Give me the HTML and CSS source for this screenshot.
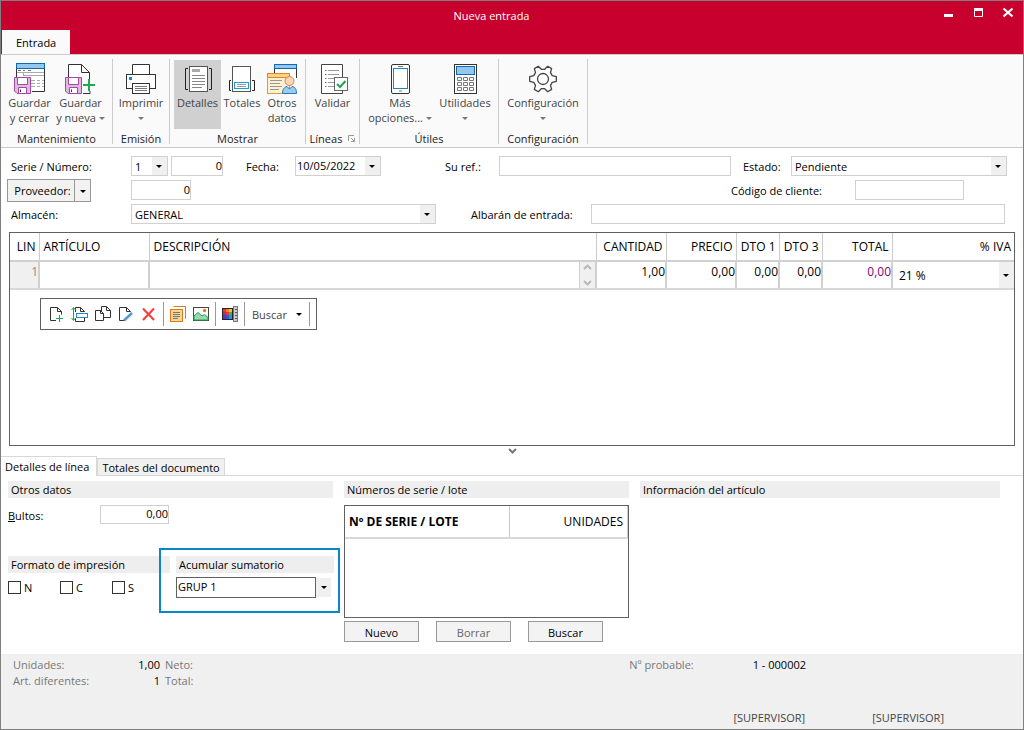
FILE: index.html
```html
<!DOCTYPE html>
<html lang="es">
<head>
<meta charset="utf-8">
<title>Nueva entrada</title>
<link rel="stylesheet" href="styles.css">
</head>
<body>
<svg class="defs" width="0" height="0" aria-hidden="true">
  <symbol id="floppy" viewBox="0 0 17 17">
    <path d="M.5.5H16.5V16.5H3L.5 14Z" fill="#dfb9e0" stroke="#a04aa5"/>
    <path d="M3.5.5H13.5V7.5H3.5Z" fill="#fff" stroke="#a04aa5"/>
    <path d="M4.5 16.5V10.5H12.5V16.5Z" fill="#fff" stroke="#a04aa5"/>
    <path d="M6.5 12.5V15" stroke="#333"/>
  </symbol>
  <symbol id="page" viewBox="0 0 16 16">
    <path d="M1.5 1.5H8.5L12.5 5.5V14.5H1.5Z" fill="#fff"/>
    <path d="M7 14.5H1.5V1.5H8.5L12.5 5.5V9M8.5 1.5V5.5H12.5" fill="none" stroke="#333"/>
  </symbol>
</svg>
<div class="window">
  <header class="titlebar">
    <h1 class="title">Nueva entrada</h1>
    <div class="window-buttons">
      <button aria-label="Minimizar"><svg width="12" height="12"><path d="M2 8.500H11" stroke="#fff" stroke-width="3"/></svg></button>
      <button aria-label="Maximizar"><svg width="12" height="12"><path d="M2.500 3V9.500H10.500V3" fill="none" stroke="#fff"/><path d="M2 2.500H11" stroke="#fff" stroke-width="3"/></svg></button>
      <button aria-label="Cerrar"><svg width="12" height="12"><path d="M1.500 1.500L10.500 9.500M10.500 1.500L1.500 9.500" stroke="#fff" stroke-width="2.200"/></svg></button>
    </div>
  </header>
  <nav class="ribbon-tabs"><button class="ribbon-tab">Entrada</button></nav>

  <div class="ribbon">
    <section class="group group-main">
      <div class="tools">
        <button class="tool">
          <svg width="32" height="32"><path d="M3 7H30V29H3Z" fill="#fff"/><path d="M2.500 7V15M30.500 7V29.500H18" fill="none" stroke="#333"/><rect x="2.500" y="1.500" width="28" height="5" fill="#93c8ee" stroke="#1267b1"/><path d="M4 8.500h3m2 0h2m3 0h3" stroke="#777"/><path d="M3 10.500H30M9.500 10.500V14M9 13.500H30M17 18.500h4m2 0h3m2 0h2M17 21.500h4m2 0h3m2 0h2M17 24.500h4m2 0h3m2 0h2" stroke="#aaa"/><use href="#floppy" y="15" width="17" height="17"/></svg>
          <span>Guardar<br>y cerrar</span>
        </button>
        <button class="tool">
          <svg width="32" height="32"><path d="M3.500 15V2.500H16.500L24.500 10.500V17M16.500 2.500V10.500H24.500M18 31.500H25V29" fill="#fff" stroke="#333"/><use href="#floppy" y="15" width="17" height="17"/><path d="M18 23H30M24 17V29" stroke="#1fa751" stroke-width="2"/></svg>
          <span>Guardar<br>y nueva <i class="caret"></i></span>
        </button>
      </div>
      <h2>Mantenimiento</h2>
    </section>
    <section class="group group-print">
      <div class="tools">
        <button class="tool">
          <svg width="32" height="32"><g fill="#fff" stroke="#333"><path d="M7.500 12.500V2.500H24.500V12.500"/><rect x="1.500" y="12.500" width="29" height="14"/><rect x="7.500" y="21.500" width="17" height="10"/><path d="M10 24.500H22M10 26.500H22M10 28.500H22" stroke="#777"/></g><rect x="4" y="15" width="3" height="3" fill="#1787d3"/></svg>
          <span>Imprimir<br><i class="caret"></i></span>
        </button>
      </div>
      <h2>Emisión</h2>
    </section>
    <section class="group group-show">
      <div class="tools">
        <button class="tool pressed">
          <svg width="32" height="32"><rect x="7.500" y="4.500" width="18" height="25" fill="#fff" stroke="#555"/><path d="M6 6.500H3.500V27.500H6M27 6.500H29.500V27.500H27" fill="none" stroke="#222"/><rect x="10" y="7" width="8" height="3" fill="#aaa"/><path d="M10 13.500H23M10 16.500H23M10 19.500H23M10 22.500H23M10 25.500H20" stroke="#888"/></svg>
          <span>Detalles</span>
        </button>
        <button class="tool">
          <svg width="32" height="32"><rect x="6.500" y="4.500" width="18" height="25" fill="#fff" stroke="#555"/><path d="M5 18.500H3.500V28.500H5M26 18.500H28.500V28.500H26" fill="none" stroke="#222"/><rect x="8.500" y="20.500" width="14" height="6" fill="#fff" stroke="#199bdc"/><path d="M11 22.500H20M11 24.500H20" stroke="#999"/></svg>
          <span>Totales</span>
        </button>
        <button class="tool narrow">
          <svg width="32" height="32"><path d="M9 6H31V24H9Z" fill="#fff"/><path d="M8.500 6V12M30.500 6V16" stroke="#333"/><rect x="8.500" y="2.500" width="22" height="4" fill="#93c8ee" stroke="#1267b1"/><rect x="1.500" y="11.500" width="22" height="20" fill="#fdf1d2" stroke="#df9a3d"/><path d="M1.500 11.500H23.500V15.500H1.500Z" fill="#fbd27f" stroke="#dd8430"/><path d="M4 18.500H16M4 21.500H14M4 24.500H16M4 27.500H13" stroke="#999"/><circle cx="23.500" cy="19" r="4.500" fill="#f8d7b8" stroke="#c98b5c"/><path d="M16.500 31.500C16.500 27 18.500 25 21 24.500L23.500 27L26 24.500C29 25 30.500 27 30.500 31.500Z" fill="#9ccbed" stroke="#2d75b5"/></svg>
          <span>Otros<br>datos</span>
        </button>
      </div>
      <h2>Mostrar</h2>
    </section>
    <section class="group group-lines">
      <div class="tools">
        <button class="tool">
          <svg width="32" height="32"><path d="M25.500 16V2.500H4.500V31.500H25.500V29" fill="#fff" stroke="#444"/><path d="M11 8.500H22M11 12.500H22M11 16.500H17M11 20.500H17M11 24.500H17" stroke="#999"/><path d="M8 8.500h1.500M8 16.500h1.500M8 24.500h1.500" stroke="#1fa751"/><path d="M8 12.500h1.500M8 20.500h1.500" stroke="#d22"/><rect x="17.500" y="15.500" width="13" height="13" fill="#fff" stroke="#666"/><path d="M20 22L23 25L28.500 19" fill="none" stroke="#1fa751" stroke-width="2"/></svg>
          <span>Validar</span>
        </button>
      </div>
      <h2>Líneas <svg class="launcher" width="7" height="7"><path d="M.5 6V.5H6M3 3L6 6M6.500 3V6.500H3" fill="none" stroke="#999"/></svg></h2>
    </section>
    <section class="group group-utils">
      <div class="tools">
        <button class="tool wide">
          <svg width="32" height="32"><rect x="7.500" y="2.500" width="18" height="29" rx="1.500" fill="#fff" stroke="#333"/><rect x="9.500" y="6.500" width="14" height="20" fill="#fff" stroke="#1b85c9"/><path d="M14 4.500H19M15 29H18" stroke="#777"/></svg>
          <span>Más<br>opciones... <i class="caret"></i></span>
        </button>
        <button class="tool">
          <svg width="32" height="32"><rect x="5.500" y="2.500" width="22" height="29" fill="#fff" stroke="#333"/><rect x="7.500" y="4.500" width="18" height="8" fill="#93c8ee" stroke="#1267b1"/><g fill="none" stroke="#777"><path d="M8.500 15.500h4v3h-4zM14.500 15.500h4v3h-4zM20.500 15.500h4v3h-4zM8.500 20.500h4v3h-4zM14.500 20.500h4v3h-4zM20.500 20.500h4v3h-4zM8.500 25.500h4v3h-4zM14.500 25.500h4v3h-4zM20.500 25.500h4v3h-4z"/></g></svg>
          <span>Utilidades<br><i class="caret"></i></span>
        </button>
      </div>
      <h2>Útiles</h2>
    </section>
    <section class="group group-config">
      <div class="tools">
        <button class="tool">
          <svg width="32" height="32" viewBox="-16 -17 32 32"><path d="M9.200-3.400L13.300-2.300V2.300L9.200 3.400L7.500 6.300L8.600 10.400L4.700 12.700L1.700 9.700H-1.700L-4.700 12.700L-8.600 10.400L-7.500 6.300L-9.200 3.400L-13.300 2.300V-2.300L-9.200-3.400L-7.500-6.300L-8.600-10.400L-4.700-12.700L-1.700-9.700H1.700L4.700-12.700L8.600-10.400L7.500-6.300Z" fill="#fff" stroke="#444" stroke-width="1.300" stroke-linejoin="round"/><circle r="5.500" fill="none" stroke="#444" stroke-width="1.300"/></svg>
          <span>Configuración<br><i class="caret"></i></span>
        </button>
      </div>
      <h2>Configuración</h2>
    </section>
  </div>

  <form class="form">
    <div class="row">
      <label class="label-first" for="serie">Serie / Número:</label>
      <span class="combo w-serie"><select id="serie"><option>1</option></select></span>
      <input class="w-num number" aria-label="Número" value="0">
      <label class="label-date" for="fecha">Fecha:</label>
      <span class="combo w-date"><select id="fecha"><option>10/05/2022</option></select></span>
      <label class="label-ref" for="ref">Su ref.:</label>
      <input class="grow" id="ref">
      <label class="label-state" for="estado">Estado:</label>
      <span class="combo w-state"><select id="estado"><option>Pendiente</option></select></span>
    </div>
    <div class="row">
      <div class="split">
        <button type="button">Proveedor:</button><button type="button" class="split-arrow" aria-label="Opciones de proveedor"><i class="caret dark"></i></button>
      </div>
      <input class="w-supplier number" aria-label="Proveedor" value="0">
      <label class="label-client" for="cliente">Código de cliente:</label>
      <input class="w-client" id="cliente">
    </div>
    <div class="row">
      <label class="label-first" for="almacen">Almacén:</label>
      <span class="combo w-store"><select id="almacen"><option>GENERAL</option></select></span>
      <label class="label-note" for="albaran">Albarán de entrada:</label>
      <input class="grow" id="albaran">
    </div>
  </form>

  <main class="lines">
    <table class="lines-table">
      <colgroup><col class="c-lin"><col class="c-art"><col><col class="c-num"><col class="c-num"><col class="c-dto"><col class="c-dto"><col class="c-num"><col class="c-iva"></colgroup>
      <thead><tr><th class="number">LIN</th><th>ARTÍCULO</th><th>DESCRIPCIÓN</th><th class="number">CANTIDAD</th><th class="number">PRECIO</th><th class="number">DTO 1</th><th class="number">DTO 3</th><th class="number">TOTAL</th><th class="number">% IVA</th></tr></thead>
      <tbody><tr>
        <td class="number line-no">1</td><td></td>
        <td class="desc"><div class="spin"><svg width="9" height="24"><path d="M1 6L4.500 2.500L8 6M1 18L4.500 21.500L8 18" fill="none" stroke="#b5b5b5" stroke-width="1.800"/></svg></div></td>
        <td class="number">1,00</td><td class="number">0,00</td><td class="number">0,00</td><td class="number">0,00</td><td class="number total">0,00</td>
        <td class="iva"><span class="combo plain"><select aria-label="% IVA"><option>21 %</option></select></span></td>
      </tr></tbody>
    </table>
    <div class="toolbar">
      <button aria-label="Nueva línea"><svg width="18" height="18"><use href="#page" x="1" y="1" width="16" height="16"/><path d="M8 13H16M12 9V17" stroke="#fff" stroke-width="3"/><path d="M8 13.500H15M11.500 10V17" stroke="#1fa751"/></svg></button>
      <button aria-label="Insertar línea"><svg width="18" height="18"><path d="M4.500 7V2.500H9.500L13.500 6.500V7M9.500 2.500V6.500H13.500M4.500 13V16.500H13.500V13" fill="none" stroke="#333"/><rect x="5.500" y="8.500" width="11" height="4" fill="#fff" stroke="#2a86cc"/><path d="M2.500 3V15M.5 5L2.500 2.500L4.500 5M.5 13L2.500 15.500L4.500 13" fill="none" stroke="#1fa751"/></svg></button>
      <button aria-label="Copiar línea"><svg width="18" height="18"><path d="M7.500 12.500V1.500H12.500L16.500 5.500V12.500Z" fill="#fff" stroke="#333"/><path d="M12.500 1.500V5.500H16.500" fill="none" stroke="#333"/><path d="M1.500 5.500H6.500L9.500 8.500V15.500H1.500Z" fill="#fff" stroke="#333"/><path d="M6.500 5.500V8.500H9.500" fill="none" stroke="#333"/></svg></button>
      <button aria-label="Editar línea"><svg width="18" height="18"><use href="#page" x="1" y="1" width="16" height="16"/><path d="M8 15.500L15.500 8.500" stroke="#fff" stroke-width="5"/><path d="M7 15.500L15 8" stroke="#4a9ad6" stroke-width="2.400"/></svg></button>
      <button aria-label="Eliminar línea"><svg width="18" height="18"><path d="M3 3.500L14 15M14 3.500L3 15" stroke="#ef4444" stroke-width="2.200"/></svg></button>
      <i class="divider"></i>
      <button aria-label="Notas"><svg width="18" height="18"><path d="M4.500 1.500H16.500V14" fill="none" stroke="#dd7a20"/><rect x="1.500" y="4.500" width="12" height="12" fill="#fad694" stroke="#dd7a20"/><path d="M4 7.500H11M4 9.500H11M4 11.500H11M4 13.500H9" stroke="#777"/></svg></button>
      <button aria-label="Imagen"><svg width="18" height="18"><rect x="1.500" y="2.500" width="15" height="13" fill="#fff" stroke="#444"/><path d="M2 11L6 7.500L10 11L12.500 9.500L16 12.500V15H2Z" fill="#9bd8b2" stroke="#1fa751"/><circle cx="12.500" cy="5.500" r="1.700" fill="#e2762b"/></svg></button>
      <i class="divider"></i>
      <button aria-label="Color"><svg width="18" height="18"><path d="M1 3H12V15H1Z" fill="#222"/><path d="M2 4h3v3H2z" fill="#e33"/><path d="M5 4h3v3H5z" fill="#f47b20"/><path d="M8 4h3v3H8z" fill="#fbc617"/><path d="M2 7h3v3H2z" fill="#b0288e"/><path d="M5 7h3v3H5z" fill="#e33"/><path d="M8 7h3v3H8z" fill="#39b54a"/><path d="M2 10h3v4H2z" fill="#6534a3"/><path d="M5 10h3v4H5z" fill="#3057d3"/><path d="M8 10h3v4H8z" fill="#179ce0"/><rect x="12.500" y="1.500" width="4" height="15" fill="#ccc" stroke="#777"/><path d="M14 4.500h2M14 7.500h2M14 10.500h2M14 13.500h2" stroke="#555"/></svg></button>
      <i class="divider"></i>
      <button class="find">Buscar <i class="caret dark"></i></button>
      <i class="divider"></i>
    </div>
  </main>

  <button class="collapse" aria-label="Contraer"><svg width="9" height="6"><path d="M1 1L4.500 4.500L8 1" fill="none" stroke="#777" stroke-width="2"/></svg></button>

  <div class="tabs" role="tablist">
    <button class="tab active" role="tab" aria-selected="true">Detalles de línea</button>
    <button class="tab" role="tab" aria-selected="false">Totales del documento</button>
  </div>

  <div class="details">
    <section class="panel">
      <h3>Otros datos</h3>
      <div class="bultos"><label for="bultos"><u>B</u>ultos:</label><input id="bultos" class="number" value="0,00"></div>
      <div class="options">
        <div class="format">
          <h3>Formato de impresión</h3>
          <div class="checks">
            <label><input type="checkbox">N</label>
            <label><input type="checkbox">C</label>
            <label><input type="checkbox">S</label>
          </div>
        </div>
        <div class="accumulate">
          <h3 id="acc">Acumular sumatorio</h3>
          <div class="entry"><input aria-labelledby="acc" value="GRUP 1"><button aria-label="Desplegar"><i class="caret dark"></i></button></div>
        </div>
      </div>
    </section>
    <section class="panel">
      <h3>Números de serie / lote</h3>
      <div class="serials">
        <table class="serials-table"><thead><tr><th class="strong">Nº DE SERIE / LOTE</th><th class="number units">UNIDADES</th></tr></thead></table>
      </div>
      <div class="actions"><button>Nuevo</button><button class="dim">Borrar</button><button>Buscar</button></div>
    </section>
    <section class="panel"><h3>Información del artículo</h3></section>
  </div>

  <footer class="status">
    <div class="status-row">
      <dl class="totals">
        <dt>Unidades:</dt><dd>1,00</dd><dt>Neto:</dt>
        <dt>Art. diferentes:</dt><dd>1</dd><dt>Total:</dt>
      </dl>
      <div class="probable"><span>Nº probable:</span><b>1 - 000002</b></div>
    </div>
    <div class="users"><span>[SUPERVISOR]</span><span>[SUPERVISOR]</span></div>
  </footer>
</div>
</body>
</html>
```
FILE: styles.css
```css
* { box-sizing: border-box; }
body { margin: 0; font: 11px/15px "Open Sans", "Noto Sans", sans-serif; color: #000; background: #fff; }
button, input, select { font: inherit; color: inherit; margin: 0; padding: 0; border-radius: 0; }
button { background: none; border: 0; }
h1, h2, h3 { margin: 0; font: inherit; }
svg { display: block; flex: none; }
.defs { position: absolute; }
.window { min-height: 100vh; display: flex; flex-direction: column; border: 1px solid #7f7f7f; }
.number { text-align: right; }

.titlebar { display: grid; grid-template-columns: 1fr auto; align-items: center; height: 29px; background: #c8002d; color: #fff; }
.title { text-align: center; padding-left: 40px; }
.window-buttons { display: flex; gap: 18px; padding: 0 9px 6px 0; }
.ribbon-tabs { display: flex; background: #c8002d; padding-left: 1px; }
.ribbon-tab { height: 24px; padding: 0 14px; background: #fafafa; }

.caret { display: inline-block; border: 3px solid transparent; border-top-color: #777; border-bottom: 0; vertical-align: 2px; }
.caret.dark { border-top-color: #000; }

.ribbon { display: flex; height: 94px; padding: 4px 0 3px; background: #fafafa; border-top: 1px solid #ccc; border-bottom: 1px solid #c8c8c8; }
.group { display: flex; flex-direction: column; justify-content: space-between; border-right: 1px solid #ccc; color: #222; }
.group h2 { display: flex; justify-content: center; align-items: center; gap: 6px; height: 12px; }
.group-main { width: 112px; }
.group-print { width: 57px; }
.group-show { width: 136px; }
.group-lines { width: 54px; }
.group-utils { width: 139px; }
.group-config { width: 89px; }
.tools { display: flex; padding-left: 4px; margin-top: 1px; }
.group-main .tools { padding: 0 6px 0 3px; }
.group-utils .tools { padding-right: 4px; }
.group-print .tools, .group-lines .tools, .group-config .tools { padding: 0; }
.tool { flex: 1 1 0; min-width: 0; height: 69px; padding: 2px 0 0; display: flex; flex-direction: column; align-items: center; gap: 1px; color: #444; white-space: nowrap; }
.pressed { background: #d0d0d0; flex: 0 0 47px; }
.group-show .tool:nth-child(2) { flex: 0 0 42px; }
.group-show .narrow { flex: 0 0 38px; }
.group-utils .wide { flex: 0 0 72px; }

.form { display: flex; flex-direction: column; gap: 4px; padding: 8px 18px 0 10px; }
.row { display: flex; align-items: center; height: 20px; }
.row input, .row select { height: 20px; border: 1px solid #d0d0d0; background: #fff; }
.row input { padding: 0 4px 2px; }
.row .number { padding-right: 0; }
.grow { flex: 1; min-width: 0; }
.combo { position: relative; display: block; }
.combo select { appearance: none; display: block; width: 100%; padding: 0 18px 0 3px; }
.combo::before { content: ""; position: absolute; inset: 1px 1px 1px auto; width: 15px; background: #f0f0f0; pointer-events: none; }
.combo::after { content: ""; position: absolute; right: 6px; top: 9px; border: 3px solid transparent; border-top-color: #000; border-bottom: 0; pointer-events: none; }
.label-first { width: 120px; }
.w-serie { width: 37px; margin-right: 3px; }
.row .w-num { width: 52px; }
.label-date { width: 49px; margin-left: 23px; }
.w-date { width: 86px; }
.row .w-date select { padding: 0 18px 2px 1px; }
.label-ref { width: 54px; margin-left: 64px; }
.label-state { width: 48px; margin-left: 12px; }
.w-state { width: 216px; margin-right: -2px; }
.split { display: flex; width: 84px; height: 23px; margin: 0 40px 0 -4px; border: 1px solid #999; background: #f2f2f2; }
.split button { flex: 1; padding-left: 3px; }
.split .split-arrow { flex: 0 0 16px; padding: 0; border-left: 1px solid #999; }
.w-supplier { width: 60px; }
.label-client { width: 124px; margin-left: auto; }
.w-client { width: 109px; margin-right: 41px; }
.w-store { width: 305px; }
.label-note { width: 120px; margin-left: 35px; }

.lines { margin: 8px 8px 0; min-height: 214px; border: 1px solid #606060; }
table { width: 100%; border-collapse: collapse; table-layout: fixed; font-size: 12px; }
th { font-weight: 400; text-align: left; padding: 0 4px; border-right: 1px solid #ccc; white-space: nowrap; }
th.number { text-align: right; }
.lines-table th { height: 28px; border-bottom: 2px solid #d0d0d0; }
.lines-table th:last-child { border-right: 0; }
.lines-table td { height: 28px; padding: 0 2px 8px; border-right: 2px solid #d0d0d0; border-bottom: 2px solid #d8d8d8; }
.c-lin { width: 29px; }
.c-art { width: 110px; }
.c-num { width: 70px; }
.c-dto { width: 43px; }
.c-iva { width: 122px; }
.lines-table .line-no { background: #f0f0f0; color: #888; }
.lines-table .number { padding-right: 3px; }
.lines-table td.number { padding-right: 0; }
.lines-table .total { color: #800080; }
.lines-table .desc, .lines-table .iva { padding: 0; }
.lines-table .iva { border-right: 0; }
.spin { display: flex; align-items: center; justify-content: center; width: 16px; height: 26px; margin-left: auto; background: #f0f0f0; border-left: 1px solid #d0d0d0; }
.plain select { height: 26px; border: 0; padding-left: 6px; background: #fff; font-size: 12px; }
.combo.plain::before { inset: 0 0 0 auto; }
.combo.plain::after { top: 12px; right: 5px; }
.toolbar { display: inline-flex; align-items: center; gap: 5px; height: 32px; margin: 8px 0 0 30px; padding: 0 6px 0 7px; border: 1px solid #606060; color: #444; }
.divider { width: 1px; height: 24px; background: #999; }
.find { display: flex; align-items: center; gap: 9px; padding: 0 2px; }
.collapse { align-self: center; height: 10px; }

.tabs { display: flex; align-items: flex-end; height: 20px; box-shadow: inset 0 -1px #d8d8d8; }
.tab { height: 18px; padding: 0 4px; background: #f0f0f0; border: 1px solid #d8d8d8; }
.tab.active { height: 20px; padding-right: 7px; background: #fff; border-left: 0; border-bottom: 0; }
.details { display: grid; grid-template-columns: 325fr 285fr 360fr; gap: 11px; padding: 5px 23px 12px 7px; }
h3 { height: 17px; padding-left: 3px; line-height: 17px; background: #eee; }
.bultos { display: flex; align-items: center; margin: 7px 0 32px; }
.bultos label { width: 92px; padding-top: 2px; }
.bultos input { width: 69px; height: 19px; border: 1px solid #d0d0d0; padding: 0 0 2px; }
.options { display: grid; grid-template-columns: minmax(0, 162fr) minmax(0, 158fr); gap: 6px; margin-right: -1px; }
.checks { display: flex; gap: 8px; padding-top: 7px; }
.checks label { display: flex; align-items: center; gap: 3px; width: 44px; }
.checks input { appearance: none; width: 13px; height: 13px; border: 1px solid #333; background: #fff; }
.accumulate { position: relative; }
.accumulate::before { content: ""; position: absolute; inset: -8px -6px -15px -17px; border: 2px solid #0a86cb; pointer-events: none; }
.entry { display: flex; align-items: center; margin-top: 4px; }
.entry input { flex: 1; min-width: 0; height: 21px; padding: 0 1px 2px; border: 1px solid #606060; background: #fff; }
.entry button { width: 15px; height: 19px; margin-right: 3px; background: #f0f0f0; }
.entry .caret { display: block; width: 0; margin: auto; }
.serials { height: 113px; margin-top: 7px; border: 1px solid #606060; }
.serials-table th { height: 32px; border-bottom: 2px solid #d8d8d8; }
.strong { font-weight: 700; }
.units { width: 118px; }
.actions { display: flex; gap: 17px; margin-top: 3px; }
.actions button { width: 75px; height: 21px; padding-top: 2px; border: 1px solid #999; background: #f3f3f3; }
.actions .dim { color: #666; }

.status { flex: 1; display: flex; flex-direction: column; justify-content: space-between; padding: 3px 79px 4px 12px; background: #f0f0f0; color: #777; }
.status-row { display: flex; justify-content: space-between; }
.totals { display: grid; grid-template-columns: 107px 40px 40px; row-gap: 1px; margin: 0; }
.totals dd { margin: 0; text-align: right; color: #000; }
.totals dt:nth-of-type(even) { padding-left: 5px; }
.probable { display: flex; gap: 59px; padding-right: 138px; }
.probable b { font-weight: 400; color: #000; }
.users { display: flex; justify-content: flex-end; gap: 67px; color: #444; }
```
